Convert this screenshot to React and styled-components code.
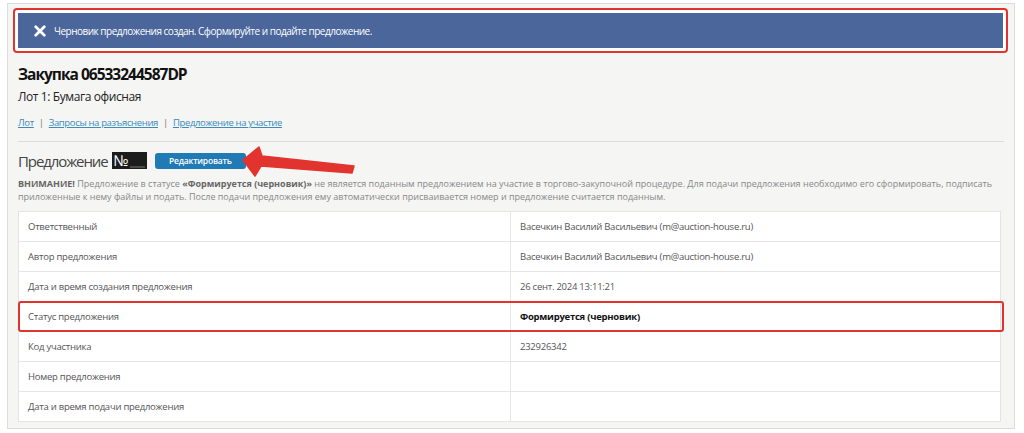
import React from 'react';
import styled, { createGlobalStyle } from 'styled-components';

const colors = {
  panel: '#f5f5f4',
  border: '#dcdcdc',
  banner: '#4a669b',
  mark: '#e2342f',
  link: '#3a8cbc',
  text: '#555',
  button: '#1f7ab5',
};

const rows = [
  { label: 'Ответственный', value: 'Васечкин Василий Васильевич (m@auction-house.ru)' },
  { label: 'Автор предложения', value: 'Васечкин Василий Васильевич (m@auction-house.ru)' },
  { label: 'Дата и время создания предложения', value: '26 сент. 2024 13:11:21' },
  { label: 'Статус предложения', value: 'Формируется (черновик)', marked: true },
  { label: 'Код участника', value: '232926342' },
  { label: 'Номер предложения', value: '' },
  { label: 'Дата и время подачи предложения', value: '' },
];

const App = () => (
  <>
    <GlobalStyle />
    <Panel>
      <BannerFrame>
        <Banner>
          <CloseIcon viewBox="0 0 14 14">
            <path d="M2 2 L12 12 M12 2 L2 12" stroke="#fff" strokeWidth="3.2" strokeLinecap="round" />
          </CloseIcon>
          <span>Черновик предложения создан. Сформируйте и подайте предложение.</span>
        </Banner>
      </BannerFrame>

      <Title>Закупка 06533244587DP</Title>
      <Lot>Лот 1: Бумага офисная</Lot>

      <Tabs>
        <TabLink href="#">Лот</TabLink>
        <Sep>|</Sep>
        <TabLink href="#">Запросы на разъяснения</TabLink>
        <Sep>|</Sep>
        <TabLink href="#">Предложение на участие</TabLink>
      </Tabs>

      <Divider />

      <ProposalHead>
        <ProposalTitle>Предложение</ProposalTitle>
        <NumberMark>№<Blank /></NumberMark>
        <EditButton>Редактировать</EditButton>
        <Arrow viewBox="0 0 125 35">
          <path
            d="M3 16 L19 3 L22 12 L114 22 L112 29 L21 22 L15 32 Z"
            fill={colors.mark}
            stroke={colors.mark}
            strokeWidth="1.5"
            strokeLinejoin="round"
          />
        </Arrow>
      </ProposalHead>

      <Notice>
        <Strong>ВНИМАНИЕ!</Strong> Предложение в статусе <Strong>«Формируется (черновик)»</Strong> не является поданным предложением на участие в торгово-закупочной процедуре. Для подачи предложения необходимо его сформировать, подписать приложенные к нему файлы и подать. После подачи предложения ему автоматически присваивается номер и предложение считается поданным.
      </Notice>

      <Table>
        {rows.map((row) => (
          <Row key={row.label} $marked={row.marked}>
            <Cell>{row.label}</Cell>
            <Cell $strong={row.marked}>{row.value}</Cell>
          </Row>
        ))}
      </Table>
    </Panel>
  </>
);

const GlobalStyle = createGlobalStyle`
  body {
    margin: 0;
    background: #fff;
    font-family: "Open Sans", "Noto Sans", Arial, sans-serif;
  }
`;

const Panel = styled.div`
  width: 986px;
  margin: 3px 0 0 7px;
  padding: 4px 10px 6px 10px;
  background: ${colors.panel};
  border: 1px solid ${colors.border};
`;

const BannerFrame = styled.div`
  margin: 0 -4px 0 -5px;
  padding: 3px;
  border: 2px solid ${colors.mark};
  border-radius: 4px;
  background: #fff;
`;

const Banner = styled.div`
  display: flex;
  align-items: center;
  gap: 8px;
  height: 35px;
  padding-left: 16px;
  background: ${colors.banner};
  color: #fff;
  font-size: 10px;
  letter-spacing: -0.5px;
`;

const CloseIcon = styled.svg`
  width: 12px;
  height: 12px;
`;

const Title = styled.h1`
  margin: 11px 0 0;
  font-size: 15.5px;
  line-height: 20px;
  font-weight: 700;
  color: #111;
  letter-spacing: -1px;
`;

const Lot = styled.div`
  margin-top: 5px;
  font-size: 12px;
  line-height: 16px;
  color: #222;
  letter-spacing: -0.4px;
`;

const Tabs = styled.div`
  display: flex;
  gap: 5px;
  margin-top: 11px;
  font-size: 9.5px;
  line-height: 14px;
  letter-spacing: -0.35px;
`;

const TabLink = styled.a`
  color: ${colors.link};
  text-decoration: underline;
`;

const Sep = styled.span`
  color: #777;
`;

const Divider = styled.div`
  height: 1px;
  margin-top: 11px;
  background: #ddd;
`;

const ProposalHead = styled.div`
  position: relative;
  display: flex;
  align-items: center;
  height: 19px;
  margin-top: 9px;
`;

const ProposalTitle = styled.span`
  font-size: 15px;
  color: #444;
  letter-spacing: -1.1px;
`;

const NumberMark = styled.span`
  display: inline-flex;
  align-items: flex-end;
  height: 17px;
  margin-left: 4px;
  padding: 0 2px;
  background: #1c1c1c;
  color: #fff;
  font-size: 15px;
  line-height: 17px;
`;

const Blank = styled.span`
  width: 15px;
  height: 2px;
  margin: 0 0 1px 1px;
  background: #4a4a4a;
`;

const EditButton = styled.button`
  margin-left: 8px;
  width: 91px;
  height: 16px;
  padding: 0;
  border: none;
  border-radius: 3px;
  background: ${colors.button};
  color: #fff;
  font-family: inherit;
  font-size: 8.5px;
  font-weight: 600;
  letter-spacing: -0.2px;
`;

const Arrow = styled.svg`
  position: absolute;
  left: 222px;
  top: -7px;
  width: 125px;
  height: 35px;
`;

const Notice = styled.p`
  margin: 7px 0 0;
  font-size: 9px;
  line-height: 13px;
  color: #888;
`;

const Strong = styled.b`
  color: #666;
`;

const Table = styled.div`
  margin: 8px 3px 0 0;
  border: 1px solid #e4e4e4;
  background: #fff;
`;

const Row = styled.div`
  position: relative;
  display: grid;
  grid-template-columns: 491px 1fr;
  height: 29px;

  &:not(:last-child) {
    border-bottom: 1px solid #e6e6e6;
  }

  ${({ $marked }) => $marked && `
    &::after {
      content: '';
      position: absolute;
      left: -1px;
      right: -4px;
      top: -1px;
      bottom: -1px;
      border: 2px solid ${colors.mark};
      border-radius: 3px;
      pointer-events: none;
    }
  `}
`;

const Cell = styled.div`
  display: flex;
  align-items: center;
  padding-left: 9px;
  font-size: 9.5px;
  letter-spacing: -0.25px;
  color: ${({ $strong }) => ($strong ? '#111' : colors.text)};
  font-weight: ${({ $strong }) => ($strong ? 700 : 400)};

  & + & {
    border-left: 1px solid #e6e6e6;
  }
`;

export default App;
